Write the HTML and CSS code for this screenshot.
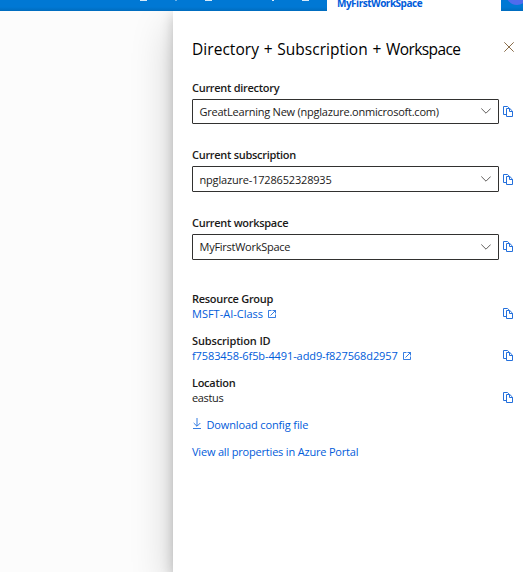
FILE: index.html
```html
<!DOCTYPE html>
<html lang="en">
<head>
<meta charset="utf-8">
<title>Directory + Subscription + Workspace</title>
<link rel="stylesheet" href="styles.css">
</head>
<body>
<svg class="defs" aria-hidden="true">
  <symbol id="copy" viewBox="0 0 10 11"><path d="M3 8.5H.5v-8h4l1.4 1.3M3.500 2.500h3.300l2.700 2.700v5.300h-6zM6.500 2.500v3h3" fill="none" stroke="currentColor"/></symbol>
  <symbol id="chevron" viewBox="0 0 10 6"><path d="M.3.5 5 5.200 9.700.5" fill="none" stroke="currentColor"/></symbol>
  <symbol id="external" viewBox="0 0 8 8"><path d="M3.500.5h-3v7h7v-3M4.500.5h3v3M7.500.5l-5 5" fill="none" stroke="currentColor" stroke-width=".8"/></symbol>
</svg>
<header class="topbar">
  <div class="tools"><i class="bell"></i><i class="dot"></i><i class="gear"></i><i class="help"></i><i class="smile"></i></div>
  <div class="tab"><span>MyFirstWorkSpace</span></div>
  <div class="account"><i class="avatar"></i></div>
</header>
<main class="page">
  <aside class="panel">
    <div class="heading">
      <h1><span class="t-dir">Directory</span> + <span>Subscription</span> + <span class="t-work">Workspace</span></h1>
      <svg class="close" viewBox="0 0 10 10"><path d="M.3.3l9.400 9.400M9.700.3.3 9.700" fill="none" stroke="currentColor"/></svg>
    </div>
    <section class="field">
      <h2 class="l-dir">Current directory</h2>
      <div class="row"><div class="select short"><span class="v-dir">GreatLearning New (npglazure.onmicrosoft.com)</span><svg class="chevron"><use href="#chevron"/></svg></div><svg class="copy"><use href="#copy"/></svg></div>
    </section>
    <section class="field">
      <h2 class="l-sub">Current subscription</h2>
      <div class="row"><div class="select"><span class="v-sub">npglazure-1728652328935</span><svg class="chevron"><use href="#chevron"/></svg></div><svg class="copy low"><use href="#copy"/></svg></div>
    </section>
    <section class="field">
      <h2 class="l-work">Current workspace</h2>
      <div class="row"><div class="select"><span class="v-work">MyFirstWorkSpace</span><svg class="chevron"><use href="#chevron"/></svg></div><svg class="copy"><use href="#copy"/></svg></div>
    </section>
    <div class="details">
      <section class="detail">
        <h2 class="l-res">Resource Group</h2>
        <div class="row"><a class="v-res">MSFT-AI-Class</a><svg class="external"><use href="#external"/></svg><svg class="copy"><use href="#copy"/></svg></div>
      </section>
      <section class="detail">
        <h2 class="l-id">Subscription ID</h2>
        <div class="row"><a class="v-id">f7583458-6f5b-4491-add9-f827568d2957</a><svg class="external"><use href="#external"/></svg><svg class="copy"><use href="#copy"/></svg></div>
      </section>
      <section class="detail">
        <h2 class="l-loc">Location</h2>
        <div class="row"><span class="v-loc">eastus</span><svg class="copy"><use href="#copy"/></svg></div>
      </section>
    </div>
    <div class="row action"><svg class="download" viewBox="0 0 8 11"><path d="M4 0v8M.7 5 4 8.300 7.300 5M0 10.500h8" fill="none" stroke="currentColor" stroke-width=".8"/></svg><a class="v-down">Download config file</a></div>
    <div class="row action"><a class="v-view">View all properties in Azure Portal</a></div>
  </aside>
</main>
</body>
</html>
```

FILE: styles.css
```css
* { box-sizing: border-box; }
body { margin: 0; height: 572px; overflow: hidden; background: #fff; color: #1b1a19; font: 11px/15px "Open Sans", "Noto Sans", sans-serif; }
h1, h2 { margin: 0; }
svg { display: block; flex: none; }
.defs { position: absolute; width: 0; height: 0; }
.topbar { display: grid; grid-template-columns: 327px 174px 22px; height: 11px; background: linear-gradient(#0078d4 7px, #006cbe); }
.tools { display: flex; padding-left: 140px; }
.tools i { height: 1px; background: #d5eafa; }
.bell { width: 7px; }
.dot { width: 2px; margin-left: 28px; opacity: .5; }
.gear { width: 7px; margin-left: 28px; }
.help { width: 2px; margin-left: 60px; }
.smile { width: 7px; margin-left: 28px; }
.tab { height: 11px; padding-left: 10px; background: #fff; color: #015cda; font-weight: 700; font-size: 10px; line-height: 7px; }
.tab span { letter-spacing: -.5px; }
.account { overflow: hidden; }
.avatar { display: block; width: 22px; height: 22px; margin: -17px 0 0 5px; border-radius: 50%; background: #4f6bed; }
.page { height: 561px; padding-left: 173px; background: #fcfcfc; overflow: hidden; }
.panel { width: 350px; height: 561px; padding: 28px 9px 0 19px; background: #fff; box-shadow: 0 16px 40px rgba(0,0,0,.2), 0 4px 12px rgba(0,0,0,.2); }
.heading { display: flex; justify-content: space-between; height: 41px; }
h1 { color: #000; font-size: 15.500px; line-height: 20px; font-weight: 400; white-space: nowrap; word-spacing: .7px; }
.t-dir { letter-spacing: .05px; }
.t-work { letter-spacing: -.6px; }
.close { width: 10px; height: 10px; margin: 3px 0 0; color: #8a6d4a; }
h2 { height: 15px; font-size: 11px; line-height: 15px; font-weight: 600; white-space: nowrap; letter-spacing: -.29px; }
.l-id { letter-spacing: -.15px; }
.row { display: flex; align-items: center; }
.field { height: 67px; }
.field + .field { height: 68px; }
.field .row { margin-top: 4px; }
.select { display: flex; align-items: center; justify-content: space-between; width: 307px; height: 26px; padding: 0 7px 0 6.500px; border: 1px solid #323130; border-radius: 1px; white-space: nowrap; }
.short { height: 25px; }
.chevron { width: 10px; height: 6px; margin-top: -1px; color: #605e5c; }
.copy { width: 10px; height: 11px; color: #2470dc; }
.field .copy { margin: -1px 0 0 4px; }
.field .low { margin-top: 1px; }
.details { padding-top: 8px; }
.detail { height: 42px; }
.detail:last-child { height: 36px; }
.detail .row { height: 15px; }
.detail .copy { margin: 0 1px 0 auto; }
.external { width: 8px; height: 8px; margin-left: 5px; color: #015cda; }
a { color: #015cda; white-space: nowrap; }
.v-dir { letter-spacing: -.23px; }
.v-sub { letter-spacing: -.18px; }
.v-work { margin-top: -2px; letter-spacing: -.26px; }
.v-id { letter-spacing: -.1px; }
.v-loc { letter-spacing: -.35px; }
.v-down { letter-spacing: -.13px; }
.v-view { letter-spacing: -.19px; }
.action { height: 27px; }
.download { width: 8px; height: 11px; margin: -3px 5.500px 0 1px; color: #015cda; }
```
